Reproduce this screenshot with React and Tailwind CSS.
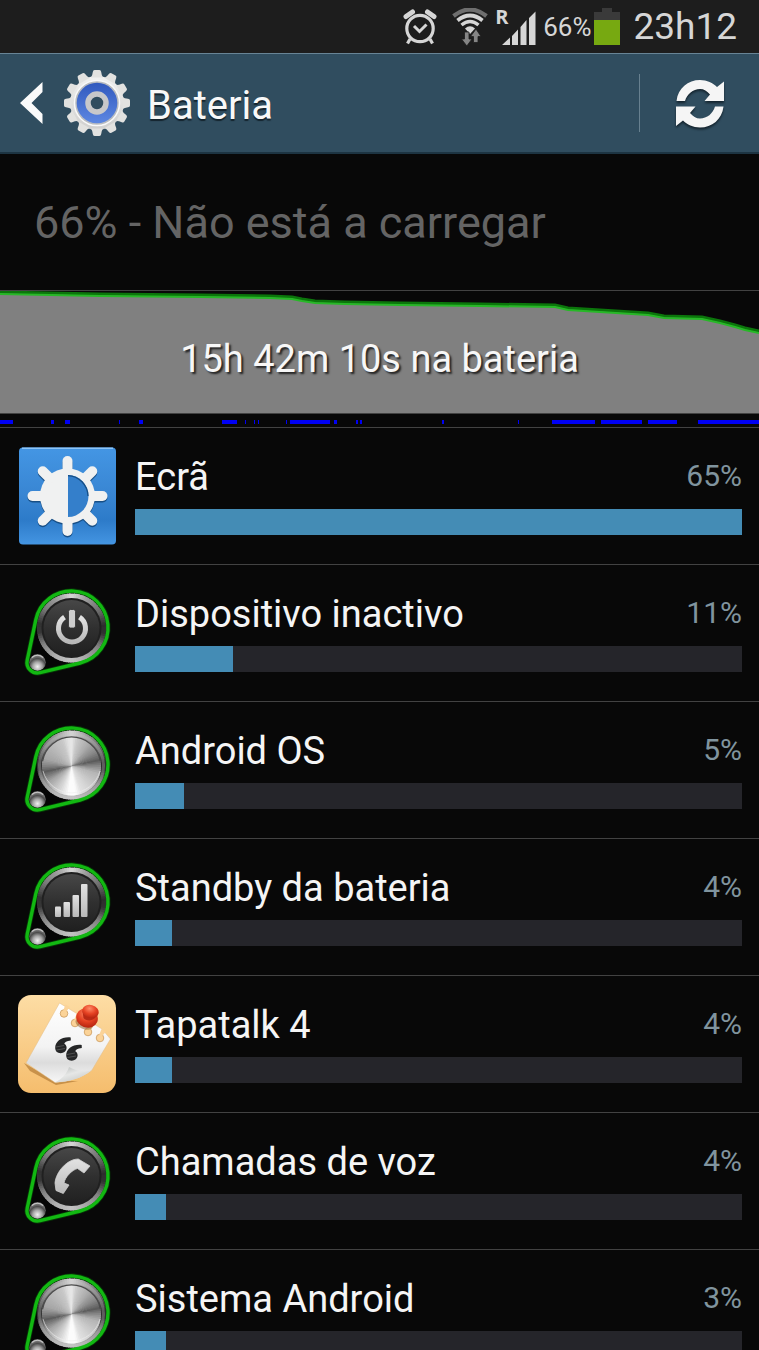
import React from "react";

const HISTORY_LINE =
  "0,2 100,4 200,5 270,6 292,7 302,9 315,11 345,12 400,13 480,14 555,15 568,18 600,20 648,23 664,26 702,27 720,31 735,35 745,38 759,41";

const SCREEN_ON = [
  [0, 13], [51, 3], [65, 5], [119, 1], [139, 4], [222, 15], [245, 1], [254, 1], [258, 1],
  [286, 1], [290, 40], [334, 3], [356, 2], [360, 2], [442, 2], [518, 1], [552, 43],
  [601, 41], [648, 29], [698, 61],
];

const USAGE = [
  { name: "Ecrã", percent: "65%", fill: 100, icon: "display" },
  { name: "Dispositivo inactivo", percent: "11%", fill: 16.1, icon: "power" },
  { name: "Android OS", percent: "5%", fill: 8.1, icon: "metal" },
  { name: "Standby da bateria", percent: "4%", fill: 6.1, icon: "signal" },
  { name: "Tapatalk 4", percent: "4%", fill: 6.1, icon: "note" },
  { name: "Chamadas de voz", percent: "4%", fill: 5.1, icon: "phone" },
  { name: "Sistema Android", percent: "3%", fill: 5.1, icon: "metal" },
];

// Grey level by angle in degrees, clockwise from the top.
const FACE_STOPS = [[0, 232], [12, 200], [35, 175], [60, 135], [78, 92], [90, 135], [105, 180], [135, 205], [160, 225], [172, 252], [186, 252], [205, 215], [235, 165], [258, 92], [270, 130], [285, 165], [315, 185], [340, 200], [352, 225], [360, 232]];
const RIM_STOPS = [[0, 215], [25, 160], [60, 105], [85, 45], [100, 50], [125, 130], [160, 175], [180, 195], [210, 175], [240, 130], [262, 55], [278, 50], [305, 120], [335, 160], [360, 215]];

function levelAt(stops, angle) {
  const i = stops.findIndex((s) => s[0] >= angle);
  if (i <= 0) return stops[0][1];
  const [a0, v0] = stops[i - 1];
  const [a1, v1] = stops[i];
  return Math.round(v0 + ((v1 - v0) * (angle - a0)) / (a1 - a0));
}

function Sweep({ cx, cy, r, stops }) {
  const step = 4;
  const top = stops[0][1];
  const point = (deg) => {
    const t = (deg * Math.PI) / 180;
    return `${(cx + r * Math.sin(t)).toFixed(2)} ${(cy - r * Math.cos(t)).toFixed(2)}`;
  };
  return (
    <g>
      <circle cx={cx} cy={cy} r={r - 0.5} fill={`rgb(${top},${top},${top})`} />
      {Array.from({ length: 360 / step }, (_, i) => {
        const v = levelAt(stops, i * step + step / 2);
        return (
          <path
            key={i}
            d={`M${cx} ${cy} L${point(i * step)} A${r} ${r} 0 0 1 ${point(i * step + step + (i < 89 ? 2 : 0))} Z`}
            fill={`rgb(${v},${v},${v})`}
          />
        );
      })}
    </g>
  );
}

function KnobIcon({ kind }) {
  const id = React.useId();
  return (
    <svg className="size-[98px] shrink-0" viewBox="0 0 98 98" aria-hidden="true">
      <defs>
        <linearGradient id={`${id}d`} x1="0" y1="0" x2="0" y2="1">
          <stop offset="0" stopColor="#474747" />
          <stop offset="0.5" stopColor="#303030" />
          <stop offset="1" stopColor="#202020" />
        </linearGradient>
        <radialGradient id={`${id}b`} cx="0.5" cy="0.75" r="0.7">
          <stop offset="0" stopColor="#f2f2f2" />
          <stop offset="0.4" stopColor="#a5a5a5" />
          <stop offset="0.7" stopColor="#4c4c4c" />
          <stop offset="1" stopColor="#8d8d8d" />
        </radialGradient>
        <linearGradient id={`${id}g`} x1="0" y1="0" x2="0" y2="1">
          <stop offset="0" stopColor="#e2e2e2" />
          <stop offset="1" stopColor="#b9b9b9" />
        </linearGradient>
      </defs>
      <path
        d="M17.8 35.9 A36.5 36.5 0 1 1 62.1 79 L22 88.7 A10.5 10.5 0 0 1 9.2 76.3 Z"
        fill="#050505"
        stroke="#063a06"
        strokeWidth="5"
      />
      <Sweep cx={53.5} cy={44} r={34.5} stops={RIM_STOPS} />
      <path
        d="M17.8 35.9 A36.5 36.5 0 1 1 62.1 79 L22 88.7 A10.5 10.5 0 0 1 9.2 76.3 Z"
        fill="none"
        stroke="#12b812"
        strokeWidth="3.4"
      />
      <circle cx="19.5" cy="78.5" r="8.3" fill={`url(#${id}b)`} />
      <path d="M14 73.5 Q19.5 69 25 73.5" fill="none" stroke="#c4c4c4" strokeWidth="1.2" />
      {kind === "metal" ? (
        <>
          <circle cx="53.5" cy="45" r="32" fill="none" stroke="#cccccc" strokeWidth="3" opacity="0.3" />
          <Sweep cx={53.5} cy={45} r={29.5} stops={FACE_STOPS} />
          <path d="M24.5 40 A29.5 29.5 0 0 1 82.5 40" fill="none" stroke="#4b4b4b" strokeWidth="1.4" />
          <path d="M25 50 A29.5 29.5 0 0 0 82 50" fill="none" stroke="#eeeeee" strokeWidth="1" opacity="0.6" />
        </>
      ) : (
        <>
          <circle cx="53.5" cy="44" r="30" fill="#202020" />
          <circle cx="53.5" cy="44" r="28" fill={`url(#${id}d)`} />
        </>
      )}
      {kind === "power" && (
        <>
          <path d="M46.5 33.2 A13.5 13.5 0 1 0 61.5 33.2" fill="none" stroke={`url(#${id}g)`} strokeWidth="5" />
          <rect x="50.5" y="25.5" width="7" height="18.5" rx="2" fill="#cdcdcd" stroke="#303030" strokeWidth="0.8" />
        </>
      )}
      {kind === "signal" && (
        <g fill={`url(#${id}g)`}>
          <rect x="37" y="48.5" width="6" height="10.5" rx="1" />
          <rect x="45.5" y="44" width="6.5" height="15" rx="1" />
          <rect x="54.5" y="37" width="6.5" height="22" rx="1" />
          <rect x="63" y="26" width="6.5" height="33" rx="1" />
        </g>
      )}
      {kind === "phone" && (
        <path
          d="M37 51 C38 40 49 27 60.3 27 L72 34 L66 41 L59.5 36.5 C54 38 47 45 46 51 L51 53 L45.3 61.5 L38 58.5 Z"
          fill={`url(#${id}g)`}
          stroke="#cfcfcf"
          strokeWidth="0.8"
          strokeLinejoin="round"
        />
      )}
    </svg>
  );
}

function DisplayIcon() {
  return (
    <svg className="size-[98px] shrink-0" viewBox="0 0 98 98" aria-hidden="true">
      <defs>
        <linearGradient id="display-bg" x1="0" y1="0" x2="0" y2="1">
          <stop offset="0" stopColor="#4496e4" />
          <stop offset="0.5" stopColor="#3885d2" />
          <stop offset="0.75" stopColor="#2d7bc9" />
          <stop offset="1" stopColor="#4495e2" />
        </linearGradient>
      </defs>
      <rect x="1" y="0.5" width="97" height="97" rx="4" fill="url(#display-bg)" />
      <path d="M4 1.2 H95" stroke="#8cc4f7" strokeWidth="1.4" />
      {[["#174f86", 1.5], ["#f0f1f1", 0]].map(([color, dy]) => (
        <g key={color} transform={`translate(49.5 ${49 + dy})`} fill={color}>
          <circle r="27.5" />
          {[0, 45, 90, 135, 180, 225, 270, 315].map((a) => (
            <rect key={a} x="-5" y="-40" width="10" height="20" rx="5" transform={`rotate(${a})`} />
          ))}
        </g>
      ))}
      <path d="M50 28 A20.5 21 0 0 1 50 70 Z" fill="#347fcb" />
      <path d="M50 28.6 A20.5 21 0 0 1 70 49" fill="none" stroke="#174f86" strokeWidth="1.3" />
    </svg>
  );
}

function NoteIcon() {
  return (
    <svg className="size-[98px] shrink-0" viewBox="0 0 98 98" aria-hidden="true">
      <defs>
        <linearGradient id="note-bg" x1="0" y1="0" x2="0" y2="1">
          <stop offset="0" stopColor="#fddda5" />
          <stop offset="1" stopColor="#f5bd6d" />
        </linearGradient>
        <linearGradient id="note-paper" x1="0" y1="0" x2="0" y2="1">
          <stop offset="0" stopColor="#ffffff" />
          <stop offset="0.55" stopColor="#f3f3f3" />
          <stop offset="0.75" stopColor="#dcdcdc" />
          <stop offset="1" stopColor="#f7f7f7" />
        </linearGradient>
        <linearGradient id="note-curl" x1="0" y1="0" x2="0.7" y2="1">
          <stop offset="0" stopColor="#b4b8b7" />
          <stop offset="0.5" stopColor="#e6e7e6" />
          <stop offset="1" stopColor="#c6c9c8" />
        </linearGradient>
        <radialGradient id="note-pin" cx="0.4" cy="0.3" r="0.8">
          <stop offset="0" stopColor="#ff8b67" />
          <stop offset="0.5" stopColor="#e64223" />
          <stop offset="1" stopColor="#a91d0b" />
        </radialGradient>
      </defs>
      <rect width="98" height="98" rx="13" fill="url(#note-bg)" />
      <path d="M6 68 L12 76 L38 90 L60 86 L37 86 Z" fill="#a8702b" opacity="0.6" />
      <path d="M41.5 8 L84 34 L92.5 44 L74 75 C63 84 50 86.5 37 87.5 L8 68 Z" fill="url(#note-paper)" stroke="#e2bd85" strokeWidth="0.5" />
      {[[46, 18.5], [57, 28], [70, 37], [82, 43]].map(([x, y]) => (
        <g key={x} fill="#fbd398">
          <circle cx={x} cy={y} r="3.8" stroke="#c69252" strokeWidth="0.7" />
          <path d={`M${x - 1.2} ${y - 2} L${x + 1.5} ${y - 9} L${x + 6} ${y - 6.5} L${x + 1.8} ${y - 1.6} Z`} />
        </g>
      ))}
      <path d="M37 87.5 C44 83.5 49 79 51 72 C58 76 67 78 74 75 C64 84 50 86.5 37 87.5 Z" fill="url(#note-curl)" />
      <g fill="#252627">
        <path
          id="quote-mark"
          d="M37.2 53 C37 46.5 44 41.5 52.7 42.5 L52.8 45.5 C48.5 46 46.5 47.3 46.3 48.8 C50.5 51 48.8 58.2 42.8 58.2 C39 58.2 37.3 56 37.2 53 Z"
        />
        <path d="M48.2 60.5 C48 54 55 49 63.7 50 L63.8 53 C59.5 53.5 57.5 54.8 57.3 56.3 C61.5 58.5 59.8 65.7 53.8 65.7 C50 65.7 48.3 63.5 48.2 60.5 Z" />
      </g>
      <path d="M38 52 L46 50.5 M38.5 55 L47 53.5 M49 59.5 L57 58 M49.5 62.5 L58 61" stroke="#6b6b6b" strokeWidth="0.6" />
      <ellipse cx="66" cy="29" rx="9" ry="5" fill="#8b5425" opacity="0.5" transform="rotate(24 66 29)" />
      <ellipse cx="69" cy="23" rx="11" ry="9.5" fill="url(#note-pin)" transform="rotate(20 69 23)" />
      <path d="M64.5 16 L65.5 23 C67.5 26 74 26.5 77 23 L80 17 Z" fill="#b92a15" />
      <ellipse cx="72.5" cy="16.5" rx="8.3" ry="6.5" fill="url(#note-pin)" transform="rotate(15 72.5 16.5)" />
    </svg>
  );
}

function RowIcon({ kind }) {
  if (kind === "display") return <DisplayIcon />;
  if (kind === "note") return <NoteIcon />;
  return <KnobIcon kind={kind} />;
}

function GearIcon() {
  return (
    <svg className="size-[68px] shrink-0" viewBox="-34 -34 68 68" aria-hidden="true">
      <defs>
        <linearGradient id="gear-body" x1="0" y1="0" x2="0" y2="1">
          <stop offset="0" stopColor="#f2f2f1" />
          <stop offset="1" stopColor="#cfcfce" />
        </linearGradient>
        <linearGradient id="gear-blue" x1="0" y1="0" x2="0" y2="1">
          <stop offset="0" stopColor="#3159be" />
          <stop offset="1" stopColor="#5c87e2" />
        </linearGradient>
      </defs>
      <g fill="#e2e2e0">
        <circle r="27" fill="url(#gear-body)" />
        {Array.from({ length: 12 }, (_, i) => (
          <path key={i} d="M-6 -25.5 Q-4.6 -27.5 -4.2 -31 Q-4 -33 -2.4 -33 H2.4 Q4 -33 4.2 -31 Q4.6 -27.5 6 -25.5 Z" transform={`rotate(${i * 30})`} />
        ))}
      </g>
      <circle r="22.5" fill="#b9bcc0" stroke="#f9f9f9" strokeWidth="1.5" />
      <circle r="20.3" fill="url(#gear-blue)" />
      <circle r="9" fill="#304d5f" stroke="#c7c8ca" strokeWidth="5.5" />
    </svg>
  );
}

function StatusBar() {
  return (
    <div className="flex h-[53px] shrink-0 items-center justify-end bg-[#1d1d1d] pr-[22px] text-[#d6d6d6]">
      <svg className="mr-[15px] h-9 w-[34px]" viewBox="0 0 34 36" aria-label="Alarme" role="img">
        <g fill="none" stroke="#d6d6d6">
          <circle cx="17" cy="19.5" r="13.2" strokeWidth="3.2" />
          <path d="M11 17 L16.5 22.5 L23.5 15.5" strokeWidth="3" />
          <path d="M3 7.5 L9.5 3 M31 7.5 L24.5 3" strokeWidth="5" strokeLinecap="round" />
          <path d="M7 30 L4.5 34.5 M27 30 L29.5 34.5" strokeWidth="3.2" />
        </g>
      </svg>
      <svg className="mr-[7px] h-[38px] w-9" viewBox="0 0 36 38" aria-label="Wi-Fi" role="img">
        <g fill="none">
          <path d="M1.5 8 Q18 -5 34.5 8" stroke="#6f6f6f" strokeWidth="4.2" />
          <path d="M5.5 12.5 Q18 2.5 30.5 12.5" stroke="#d6d6d6" strokeWidth="3.8" />
          <path d="M9.5 17 Q18 10 26.5 17" stroke="#d6d6d6" strokeWidth="3.4" />
        </g>
        <path d="M13 20.5 Q18 16 23 20.5 L18 26 Z" fill="#d6d6d6" />
        <g fill="#858585" stroke="#1d1d1d" strokeWidth="0.8">
          <path d="M12.5 24 H17 V31 H20 L14.8 38 L9.5 31 H12.5 Z" />
          <path d="M21.5 34.5 H26 V28.5 H29 L24 21 L18.5 28.5 H21.5 Z" />
        </g>
      </svg>
      <div className="relative mr-[7px] h-9 w-[41px]">
        <span className="absolute left-0 top-0 font-[Open_Sans,sans-serif] text-[20px] font-bold leading-4">R</span>
        <svg className="size-full" viewBox="0 0 41 36" aria-label="Rede" role="img">
          <path d="M7 36 L15 28.5 V36 Z M17 27 L23 20.5 V36 H17 Z M25.5 18 L31.5 11 V36 H25.5 Z M34 9 L40.5 2.5 V36 H34 Z" fill="#d6d6d6" />
        </svg>
      </div>
      <span className="text-[26px] leading-8">66%</span>
      <svg className="ml-[3px] mr-[13px] h-[37px] w-[26px]" viewBox="0 0 26 37" aria-label="Bateria 66%" role="img">
        <path d="M8 0 H18 V4 H26 V37 H0 V4 H8 Z" fill="#3a3a3a" />
        <rect y="12" width="26" height="25" fill="#77a911" />
      </svg>
      <time className="text-[37px] leading-[52px]">23h12</time>
    </div>
  );
}

function TitleBar() {
  return (
    <header className="flex h-[101px] shrink-0 items-center border-b-2 border-t border-b-[#1d3442] border-t-[#688495] bg-[#304d5f] pl-5">
      <button type="button" aria-label="Voltar" className="mr-5 shrink-0">
        <svg className="h-[42px] w-[23px]" viewBox="0 0 23 42" aria-hidden="true">
          <path d="M22.5 0 V10 L11.5 21 L22.5 32 V42 L0 21 Z" fill="#fafafa" />
        </svg>
      </button>
      <GearIcon />
      <h1 className="ml-4 pt-1.5 text-[40px] leading-[52px] text-[#f8f8f8] [text-shadow:0_2px_1px_#14242e]">Bateria</h1>
      <div className="ml-auto flex items-center border-l border-[#67808f] pl-9 pr-[35px]">
        <button type="button" aria-label="Atualizar" className="flex h-[58px] items-center pt-0.5">
          <svg className="size-12 overflow-visible [filter:drop-shadow(0_2px_1px_#14242e)]" viewBox="0 0 48 48" aria-hidden="true">
            {["", "rotate(180 24 23.75)"].map((t) => (
              <path
                key={t}
                transform={t || undefined}
                d="M0.5 21 C2 8 12 0 24 0 C31 0 37 3 41 7 L48 1.5 V21 H28.5 L34 14.5 C31 11 28 9 24 9 C17 9 11 14 9 21 Z"
                fill="#f5f5f5"
              />
            ))}
          </svg>
        </button>
      </div>
    </header>
  );
}

function History() {
  return (
    <section className="shrink-0 border-y border-[#424242]">
      <div className="relative h-[123px] border-b border-[#424242]">
        <svg className="block size-full" viewBox="0 0 759 122" preserveAspectRatio="none" aria-hidden="true">
          <polygon points={`0,122 ${HISTORY_LINE} 759,122`} fill="#808080" />
          <polyline points={HISTORY_LINE} fill="none" stroke="#0b760b" strokeWidth="3" transform="translate(0 -1)" />
          <polyline points={HISTORY_LINE} fill="none" stroke="#27b827" strokeWidth="2" transform="translate(0 1)" />
        </svg>
        <p className="absolute inset-x-0 top-[42px] text-center text-[38px] leading-[52px] text-[#f7f7f7] [text-shadow:2px_2px_2px_#222]">
          15h 42m 10s na bateria
        </p>
      </div>
      <svg className="block h-[13px] w-full" viewBox="0 0 759 13" preserveAspectRatio="none" aria-hidden="true">
        {SCREEN_ON.map(([x, w]) => (
          <rect key={x} x={x} y="6" width={w} height="4" fill="#0000f4" />
        ))}
      </svg>
    </section>
  );
}

function UsageRow({ item }) {
  return (
    <li className="border-b border-[#424242]">
      <a href="#detalhes" className="flex h-[136px] items-center gap-[19px] pl-[18px] pr-[17px]">
        <RowIcon kind={item.icon} />
        <div className="flex min-w-0 flex-1 flex-col gap-1.5 pb-1.5">
          <div className="flex items-start justify-between">
            <span className="text-[38px] leading-[52px] text-[#f5f5f5]">{item.name}</span>
            <span className="text-[30px] leading-[50px] text-[#80949e]">{item.percent}</span>
          </div>
          <div className="h-[26px] bg-[#25252a]">
            <div className="h-full bg-[#448cb5]" style={{ width: `${item.fill}%` }} />
          </div>
        </div>
      </a>
    </li>
  );
}

export default function App() {
  return (
    <div className="flex h-screen flex-col overflow-hidden bg-[#080808] font-[Roboto,sans-serif]">
      <StatusBar />
      <TitleBar />
      <main className="flex min-h-0 flex-1 flex-col">
        <p className="shrink-0 px-[34px] pb-[41px] pt-[43px] text-[45px] leading-[52px] text-[#646464]">66% - Não está a carregar</p>
        <History />
        <ul className="min-h-0 flex-1 overflow-y-auto [scrollbar-width:none]">
          {USAGE.map((item) => (
            <UsageRow key={item.name} item={item} />
          ))}
        </ul>
      </main>
    </div>
  );
}
